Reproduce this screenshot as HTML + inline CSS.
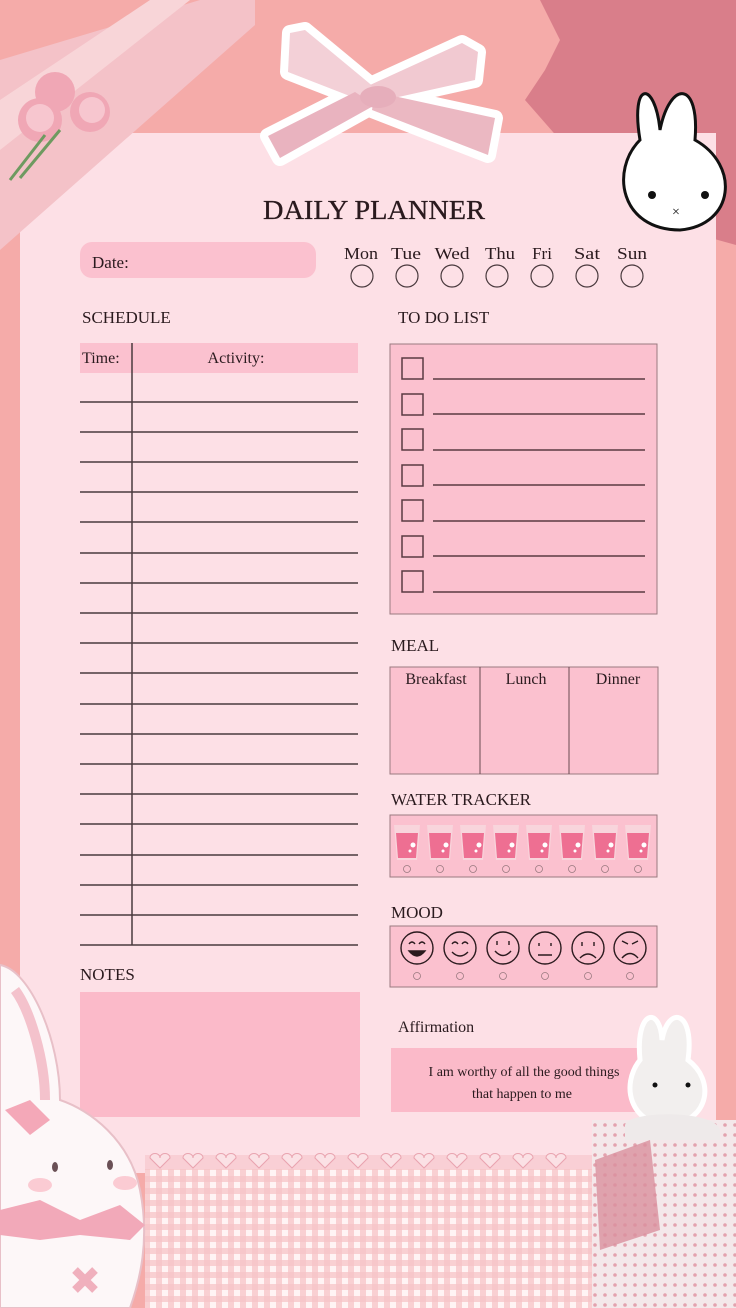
<!DOCTYPE html>
<html><head><meta charset="utf-8"><style>
html,body{margin:0;padding:0;background:#f4aaa8;}
svg{display:block;}
text{font-family:"Liberation Serif",serif;fill:#2a1a1e;}
</style></head><body>
<svg width="736" height="1308" viewBox="0 0 736 1308" xmlns="http://www.w3.org/2000/svg">
<defs>
<pattern id="ging" width="12" height="12" patternUnits="userSpaceOnUse">
<rect width="12" height="12" fill="#fff4f4"/>
<rect width="6" height="12" fill="#f7c4c6" opacity=".75"/>
<rect width="12" height="6" fill="#f7c4c6" opacity=".75"/>
</pattern>
<pattern id="dots" width="10" height="10" patternUnits="userSpaceOnUse">
<rect width="10" height="10" fill="#f4e8ea"/><circle cx="5" cy="5" r="1.8" fill="#e3a2ae"/>
</pattern>
</defs>
<rect width="736" height="1308" fill="#f5aba9"/>
<!-- torn paper top right -->
<path d="M540 0 L736 0 L736 245 L700 235 L650 215 L600 190 L560 140 L525 100 L545 70 L560 40 Z" fill="#d97e8a"/>
<!-- page -->
<rect x="20" y="133" width="696" height="1040" fill="#fde0e6"/>
<!-- lace ribbon top left -->
<path d="M0 60 L200 0 L255 0 L255 25 L0 250 Z" fill="#f4c2c8"/>
<path d="M0 100 L150 0 L190 0 L0 150 Z" fill="#f8d5d8"/>
<g fill="#f0a7b5"><circle cx="40" cy="120" r="22"/><circle cx="90" cy="112" r="20"/><circle cx="55" cy="92" r="20"/></g>
<g fill="#f7c6cf"><circle cx="40" cy="118" r="14"/><circle cx="92" cy="110" r="13"/></g>
<path d="M45 135 L10 180 M60 130 L20 178" stroke="#6e9a60" stroke-width="3"/>
<!-- bow -->
<g stroke="#fff" stroke-width="16" stroke-linejoin="round" fill="#fff">
<path d="M290 33 L305 30 L375 88 L360 100 L288 72 Z"/>
<path d="M370 85 L462 43 L478 52 L475 80 L385 100 Z"/>
<path d="M355 92 L375 105 L280 158 L268 136 Z"/>
<path d="M375 92 L495 118 L488 155 L372 110 Z"/>
</g>
<g fill="#efc3cc">
<path d="M290 33 L305 30 L375 88 L360 100 L288 72 Z" fill="#f3d0d7"/>
<path d="M370 85 L462 43 L478 52 L475 80 L385 100 Z" fill="#f1c9d1"/>
<path d="M355 92 L375 105 L280 158 L268 136 Z" fill="#e9b3bf"/>
<path d="M375 92 L495 118 L488 155 L372 110 Z" fill="#ebb8c2"/>
</g>
<ellipse cx="378" cy="97" rx="18" ry="11" fill="#e6aebb"/>
<!-- miffy top right -->
<path d="M640 140 C630 80 655 80 660 130 C670 80 700 80 695 140 C740 165 735 225 680 230 C620 230 610 170 640 140 Z" fill="#fff" stroke="#111" stroke-width="3"/>
<circle cx="652" cy="195" r="4" fill="#111"/><circle cx="705" cy="195" r="4" fill="#111"/>
<text x="672" y="216" font-size="14" style="fill:#111">×</text>

<!-- title -->
<text x="374" y="219" font-size="27" text-anchor="middle" textLength="222" lengthAdjust="spacingAndGlyphs" style="stroke:#2a1a1e;stroke-width:.3">DAILY PLANNER</text>
<rect x="80" y="242" width="236" height="36" rx="12" fill="#fbc1cf"/>
<text x="92" y="268" font-size="17">Date:</text>
<g font-size="17" text-anchor="middle">
<text x="361" y="259" textLength="34" lengthAdjust="spacingAndGlyphs">Mon</text><text x="406" y="259" textLength="30" lengthAdjust="spacingAndGlyphs">Tue</text><text x="452" y="259" textLength="35" lengthAdjust="spacingAndGlyphs">Wed</text><text x="500" y="259" textLength="30" lengthAdjust="spacingAndGlyphs">Thu</text><text x="542" y="259">Fri</text><text x="587" y="259" textLength="26" lengthAdjust="spacingAndGlyphs">Sat</text><text x="632" y="259" textLength="30" lengthAdjust="spacingAndGlyphs">Sun</text>
</g>
<g fill="none" stroke="#4a3a3e" stroke-width="1.2">
<circle cx="362" cy="276" r="11"/><circle cx="407" cy="276" r="11"/><circle cx="452" cy="276" r="11"/><circle cx="497" cy="276" r="11"/><circle cx="542" cy="276" r="11"/><circle cx="587" cy="276" r="11"/><circle cx="632" cy="276" r="11"/>
</g>

<!-- schedule -->
<text x="82" y="323" font-size="17">SCHEDULE</text>
<rect x="80" y="343" width="278" height="30" fill="#fbc1cf"/>
<text x="82" y="363" font-size="16">Time:</text>
<text x="236" y="363" font-size="16" text-anchor="middle">Activity:</text>
<line x1="132" y1="343" x2="132" y2="945" stroke="#4a3a3e" stroke-width="1.5"/>
<g stroke="#4a3a3e" stroke-width="1.5">
<line x1="80" x2="358" y1="402" y2="402"/><line x1="80" x2="358" y1="432" y2="432"/><line x1="80" x2="358" y1="462" y2="462"/><line x1="80" x2="358" y1="492" y2="492"/><line x1="80" x2="358" y1="522" y2="522"/><line x1="80" x2="358" y1="553" y2="553"/><line x1="80" x2="358" y1="583" y2="583"/><line x1="80" x2="358" y1="613" y2="613"/><line x1="80" x2="358" y1="643" y2="643"/><line x1="80" x2="358" y1="673" y2="673"/><line x1="80" x2="358" y1="704" y2="704"/><line x1="80" x2="358" y1="734" y2="734"/><line x1="80" x2="358" y1="764" y2="764"/><line x1="80" x2="358" y1="794" y2="794"/><line x1="80" x2="358" y1="824" y2="824"/><line x1="80" x2="358" y1="855" y2="855"/><line x1="80" x2="358" y1="885" y2="885"/><line x1="80" x2="358" y1="915" y2="915"/><line x1="80" x2="358" y1="945" y2="945"/>
</g>

<!-- to do -->
<text x="398" y="323" font-size="17">TO DO LIST</text>
<rect x="390" y="344" width="267" height="270" fill="#fbc1cf" stroke="#9a7a80" stroke-width="1"/>
<g fill="none" stroke="#5a3a42" stroke-width="1.5">
<rect x="402" y="358" width="21" height="21"/><rect x="402" y="394" width="21" height="21"/><rect x="402" y="429" width="21" height="21"/><rect x="402" y="465" width="21" height="21"/><rect x="402" y="500" width="21" height="21"/><rect x="402" y="536" width="21" height="21"/><rect x="402" y="571" width="21" height="21"/>
<line x1="433" x2="645" y1="379" y2="379"/><line x1="433" x2="645" y1="414" y2="414"/><line x1="433" x2="645" y1="450" y2="450"/><line x1="433" x2="645" y1="485" y2="485"/><line x1="433" x2="645" y1="521" y2="521"/><line x1="433" x2="645" y1="556" y2="556"/><line x1="433" x2="645" y1="592" y2="592"/>
</g>

<!-- meal -->
<text x="391" y="651" font-size="17">MEAL</text>
<rect x="390" y="667" width="268" height="107" fill="#fbc1cf" stroke="#9a7a80"/>
<line x1="480" y1="667" x2="480" y2="774" stroke="#6a4a52"/><line x1="569" y1="667" x2="569" y2="774" stroke="#6a4a52"/>
<g font-size="16" text-anchor="middle"><text x="436" y="684">Breakfast</text><text x="526" y="684">Lunch</text><text x="618" y="684">Dinner</text></g>

<!-- water -->
<text x="391" y="805" font-size="17">WATER TRACKER</text>
<rect x="390" y="815" width="267" height="62" fill="#fbc1cf" stroke="#9a7a80"/>
<g>
<g id="gl"><path d="M394 825 L420 825 L417 860 L397 860 Z" fill="#f8d5dc"/><path d="M396 833 L418 833 L416 858 L398 858 Z" fill="#ee6f92"/><circle cx="413" cy="845" r="2.5" fill="#fff"/><circle cx="410" cy="851" r="1.5" fill="#fff"/><circle cx="407" cy="869" r="3.5" fill="none" stroke="#9a7a80" stroke-width=".8"/></g>
<use href="#gl" x="33"/><use href="#gl" x="66"/><use href="#gl" x="99"/><use href="#gl" x="132"/><use href="#gl" x="165"/><use href="#gl" x="198"/><use href="#gl" x="231"/>
</g>

<!-- mood -->
<text x="391" y="918" font-size="17">MOOD</text>
<rect x="390" y="926" width="267" height="61" fill="#fbc1cf" stroke="#9a7a80"/>
<g fill="none" stroke="#2a1a1e" stroke-width="1.4">
<circle cx="417" cy="948" r="16"/><path d="M409 944 q3-4 6 0 M419 944 q3-4 6 0"/><path d="M409 951 q8 10 16 0 Z" fill="#2a1a1e"/>
<circle cx="460" cy="948" r="16"/><path d="M452 944 q3-4 6 0 M462 944 q3-4 6 0 M452 952 q8 8 16 0"/>
<circle cx="503" cy="948" r="16"/><path d="M497 941 v4 M509 941 v4 M495 951 q8 9 16 0"/>
<circle cx="545" cy="948" r="16"/><path d="M539 943 v3 M551 943 v3 M538 955 h14"/>
<circle cx="588" cy="948" r="16"/><path d="M582 942 v4 M594 942 v4 M580 958 q8 -8 16 0"/>
<circle cx="630" cy="948" r="16"/><path d="M622 941 l6 3 M638 941 l-6 3 M622 958 q8 -9 16 0"/>
</g>
<g fill="none" stroke="#9a7a80" stroke-width=".8"><circle cx="417" cy="976" r="3.5"/><circle cx="460" cy="976" r="3.5"/><circle cx="503" cy="976" r="3.5"/><circle cx="545" cy="976" r="3.5"/><circle cx="588" cy="976" r="3.5"/><circle cx="630" cy="976" r="3.5"/></g>

<!-- notes -->
<text x="80" y="980" font-size="17">NOTES</text>
<rect x="80" y="992" width="280" height="125" fill="#fbbac9"/>

<!-- affirmation -->
<text x="398" y="1032" font-size="16">Affirmation</text>
<rect x="391" y="1048" width="250" height="64" fill="#fbbac9"/>
<text x="524" y="1076" font-size="14" text-anchor="middle">I am worthy of all the good things</text>
<text x="522" y="1098" font-size="14" text-anchor="middle">that happen to me</text>

<!-- gingham bottom -->
<rect x="145" y="1168" width="448" height="140" fill="url(#ging)"/>
<rect x="145" y="1155" width="448" height="14" fill="#f9cfd5"/>
<g fill="#fbe1e5" stroke="#e9a3af" stroke-width="1">
<path d="M150 1158 c0-6 10-6 10 0 c0-6 10-6 10 0 l-10 10 z"/><path d="M183 1158 c0-6 10-6 10 0 c0-6 10-6 10 0 l-10 10 z"/><path d="M216 1158 c0-6 10-6 10 0 c0-6 10-6 10 0 l-10 10 z"/><path d="M249 1158 c0-6 10-6 10 0 c0-6 10-6 10 0 l-10 10 z"/><path d="M282 1158 c0-6 10-6 10 0 c0-6 10-6 10 0 l-10 10 z"/><path d="M315 1158 c0-6 10-6 10 0 c0-6 10-6 10 0 l-10 10 z"/><path d="M348 1158 c0-6 10-6 10 0 c0-6 10-6 10 0 l-10 10 z"/><path d="M381 1158 c0-6 10-6 10 0 c0-6 10-6 10 0 l-10 10 z"/><path d="M414 1158 c0-6 10-6 10 0 c0-6 10-6 10 0 l-10 10 z"/><path d="M447 1158 c0-6 10-6 10 0 c0-6 10-6 10 0 l-10 10 z"/><path d="M480 1158 c0-6 10-6 10 0 c0-6 10-6 10 0 l-10 10 z"/><path d="M513 1158 c0-6 10-6 10 0 c0-6 10-6 10 0 l-10 10 z"/><path d="M546 1158 c0-6 10-6 10 0 c0-6 10-6 10 0 l-10 10 z"/>
</g>

<!-- bottom right lace/bunny -->
<rect x="592" y="1120" width="144" height="188" fill="url(#dots)"/>
<path d="M595 1160 L650 1140 L660 1230 L600 1250 Z" fill="#d9909e" opacity=".8"/>
<path d="M640 1060 C635 1010 660 1005 662 1040 C668 1005 695 1010 688 1060 C715 1080 710 1120 670 1125 C630 1125 620 1085 640 1060 Z" fill="#f2efee" stroke="#fff" stroke-width="5"/>
<circle cx="655" cy="1085" r="2.5" fill="#111"/><circle cx="688" cy="1085" r="2.5" fill="#111"/>
<path d="M625 1125 C630 1110 715 1110 720 1130 L720 1140 L625 1140 Z" fill="#eeeaea"/>

<!-- bottom left bunny -->
<path d="M0 965 C30 970 60 1040 60 1100 C90 1110 130 1140 140 1190 C150 1240 140 1280 130 1308 L0 1308 Z" fill="#fdf7f8" stroke="#e8c0c8" stroke-width="2"/>
<path d="M15 990 C30 1010 45 1060 45 1100" stroke="#f4c2cc" stroke-width="10" fill="none"/>
<path d="M5 1110 L30 1100 L50 1120 L30 1135 Z" fill="#f4a8b8"/>
<ellipse cx="55" cy="1167" rx="3" ry="5" fill="#6a5056"/><ellipse cx="110" cy="1165" rx="3" ry="5" fill="#6a5056"/>
<ellipse cx="40" cy="1185" rx="12" ry="7" fill="#fbcbd3"/><ellipse cx="125" cy="1183" rx="12" ry="7" fill="#fbcbd3"/>
<path d="M0 1210 L40 1200 L80 1220 L120 1205 L145 1225 L130 1240 L80 1235 L40 1240 L0 1235 Z" fill="#f2a9b9"/>
<path d="M75 1270 l20 20 M95 1270 l-20 20" stroke="#f0b0bd" stroke-width="8"/>
</svg>
</body></html>
